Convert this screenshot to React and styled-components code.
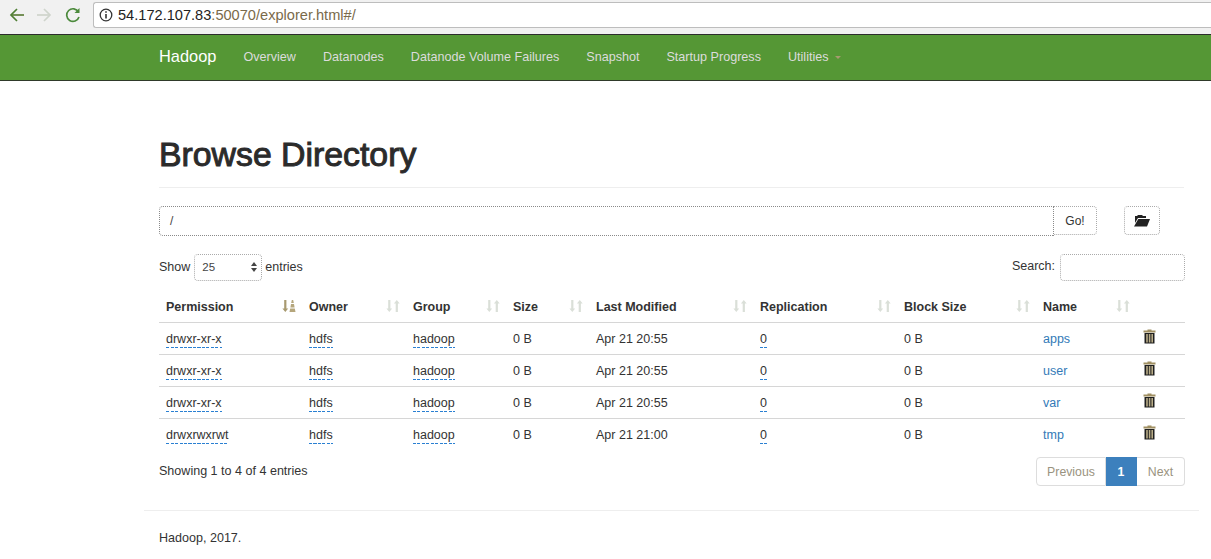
import React from 'react'
import styled, {createGlobalStyle} from 'styled-components'

const GlobalStyle = createGlobalStyle`
	html, body {
		margin: 0;
		padding: 0;
		background: #fff;
	}
	body {
		font-family: 'Liberation Sans', Arial, sans-serif;
		font-size: 13px;
		color: #333;
	}
	* {
		box-sizing: border-box;
	}
`

const ChromeBar = styled.div`
	height: 35px;
	background: #f1f1f1;
	border-bottom: 1px solid #2c2c2c;
	display: flex;
	align-items: flex-start;
	padding: 2px 0 0 8px;
`

const ChromeButton = styled.span`
	width: 18px;
	height: 18px;
	margin-top: 4px;
	margin-right: ${props => props.gap || '11px'};
	display: flex;
`

const AddressBar = styled.div`
	flex: 1;
	height: 26px;
	background: #fff;
	border: 1px solid #bdbdbd;
	border-right: none;
	border-radius: 3px 0 0 3px;
	display: flex;
	align-items: center;
	padding-left: 5px;
	font-size: 14.6px;
	color: #7a6a4a;
`

const Host = styled.span`
	color: #222;
	margin-left: 5px;
`

const Navbar = styled.nav`
	height: 46px;
	background: #559735;
	border-bottom: 1px solid #2f3a2a;
	display: flex;
	align-items: center;
	padding: 0 0 2px 159px;
`

const Brand = styled.span`
	color: #fff;
	font-size: 16.4px;
	margin-right: 27px;
`

const NavItem = styled.span`
	color: #dcdcdc;
	font-size: 12.6px;
	margin-right: 27px;
	display: flex;
	align-items: center;
`

const Caret = styled.i`
	width: 0;
	height: 0;
	margin-left: 6px;
	margin-top: 2px;
	border-top: 3px solid #a89a70;
	border-left: 3px solid transparent;
	border-right: 3px solid transparent;
`

const Container = styled.main`
	width: 1056px;
	margin-left: 144px;
	padding: 0 15px;
`

const PageHeader = styled.div`
	width: 1025px;
	padding-top: 53px;
	height: 107px;
	border-bottom: 1px solid #eee;
`

const Title = styled.h1`
	margin: 0;
	font-size: 33.8px;
	line-height: 40px;
	font-weight: normal;
	-webkit-text-stroke: 1px #2b2b2b;
	color: #2b2b2b;
`

const PathRow = styled.div`
	display: flex;
	margin-top: 18px;
	height: 30px;
`

const PathInput = styled.div`
	width: 895px;
	height: 30px;
	border: 1px dotted #8a8a8a;
	border-radius: 4px 0 0 4px;
	padding: 0 10px;
	font-size: 12px;
	line-height: 28px;
	color: #444;
`

const GoButton = styled.button`
	width: 43px;
	height: 29px;
	border: 1px dotted #aaa;
	border-left: none;
	border-radius: 0 4px 4px 0;
	background: #fff;
	font: 12px 'Liberation Sans', sans-serif;
	color: #333;
	padding: 0;
`

const FolderButton = styled.button`
	width: 36px;
	height: 29px;
	margin-left: 27px;
	border: 1px dotted #aaa;
	border-radius: 4px;
	background: #fff;
	padding: 0;
	display: flex;
	align-items: center;
	justify-content: center;
`

const ControlsRow = styled.div`
	display: flex;
	justify-content: space-between;
	align-items: center;
	margin-top: 18px;
	height: 27px;
	font-size: 12.5px;
`

const LengthLabel = styled.div`
	display: flex;
	align-items: center;
	padding-bottom: 1px;
`

const SelectBox = styled.div`
	width: 68px;
	height: 27px;
	margin: 0 3px 0 4px;
	border: 1px dotted #aaa;
	border-radius: 4px;
	display: flex;
	align-items: center;
	justify-content: space-between;
	padding: 0 3px 0 7px;
	font-size: 11.5px;
	color: #444;
`

const SearchLabel = styled.div`
	display: flex;
	align-items: flex-start;
	height: 27px;
	line-height: 25px;
`

const SearchInput = styled.div`
	width: 125px;
	height: 27px;
	margin-left: 5px;
	border: 1px dotted #aaa;
	border-radius: 4px;
`

const Table = styled.table`
	width: 1026px;
	margin-top: 9px;
	border-collapse: collapse;
	table-layout: fixed;
	font-size: 12.5px;
`

const HeadCell = styled.th`
	height: 32px;
	padding: 3px 7px 0;
	text-align: left;
	font-weight: bold;
	font-size: 12.5px;
	color: #333;
	border-bottom: 1px solid #d6d6d6;
	position: relative;
`

const SortSlot = styled.span`
	position: absolute;
	right: 6px;
	top: 9px;
	display: flex;
`

const Cell = styled.td`
	height: 32px;
	padding: 1px 7px 0;
	border-top: 1px solid #d6d6d6;
	color: #333;
`

const Dashed = styled.span`
	padding-bottom: 2px;
	background: repeating-linear-gradient(to right, #2a80d2 0 3px, transparent 3px 4.5px) left bottom / 100% 1px no-repeat;
`

const NameLink = styled.a`
	color: #337ab7;
`

const TrashSlot = styled.span`
	display: flex;
	margin-top: -4px;
`

const FooterRow = styled.div`
	display: flex;
	justify-content: space-between;
	align-items: flex-start;
	margin-top: 7px;
`

const Info = styled.div`
	font-size: 12.55px;
	padding-top: 7px;
`

const Pagination = styled.div`
	display: flex;
	height: 29px;
	font-size: 12.3px;
`

const PageLink = styled.span`
	display: flex;
	align-items: center;
	justify-content: center;
	width: ${props => props.width};
	color: ${props => props.active ? '#fff' : '#9a9380'};
	font-weight: ${props => props.active ? 'bold' : 'normal'};
	background: ${props => props.active ? '#3c80bd' : '#fff'};
	border: 1px solid ${props => props.active ? '#3c80bd' : '#ddd'};
	border-left-width: ${props => props.first ? '1px' : '0'};
	border-radius: ${props => props.first ? '4px 0 0 4px' : props.last ? '0 4px 4px 0' : '0'};
`

const FooterLine = styled.div`
	width: 1055px;
	margin: 24px 0 0 -15px;
	border-top: 1px solid #eee;
	padding: 20px 15px 0;
	font-size: 12.55px;
	color: #333;
`

const BackIcon = () => (
	<svg width="18" height="18" viewBox="0 0 18 18" fill="none" strokeWidth="1.7">
		<path d="M16 9H3" stroke="#5f7f3c" />
		<path d="M9 3L3 9l6 6" stroke="#4f7f34" />
	</svg>
)

const ForwardIcon = () => (
	<svg width="18" height="18" viewBox="0 0 18 18" fill="none" stroke="#cfd4cc" strokeWidth="1.7">
		<path d="M2 9h13" />
		<path d="M9 3l6 6-6 6" />
	</svg>
)

const ReloadIcon = () => (
	<svg width="18" height="18" viewBox="0 0 18 18" fill="none">
		<path d="M14.5 6A6.3 6.3 0 1 0 15 11" stroke="#4c8a3c" strokeWidth="1.7" />
		<path d="M15.5 2v5h-5z" fill="#4c8a3c" />
	</svg>
)

const InfoIcon = () => (
	<svg width="14" height="14" viewBox="0 0 14 14" fill="none">
		<circle cx="7" cy="7" r="5.8" stroke="#333" strokeWidth="1.3" />
		<path d="M6.2 3.3h1.6v1.5H6.2zM6.2 6h1.6v4.6H6.2z" fill="#333" />
	</svg>
)

const SortIcon = ({active}) => (
	<svg width="14" height="14" viewBox="0 0 14 14">
		<path d="M2.2 1h2.2v8.5h1.8L3.3 13 .4 9.5h1.8z" fill={active ? '#a89a70' : '#dadfd8'} />
		{active
			? <path d="M9.8 1h1.4l.6 3H9.2zM9 5h3l.6 3.4H8.4zM8.2 9.4h4.6l.7 3.6H7.5z" fill="#b5a67c" />
			: <path d="M9.7 13h2.2V4.5h1.8L10.8 1 7.9 4.5h1.8z" fill="#dadfd8" />}
	</svg>
)

const SelectArrows = () => (
	<svg width="8" height="12" viewBox="0 0 8 12" fill="#444">
		<path d="M4 1l3 4H1zM4 11L1 7h6z" />
	</svg>
)

const FolderIcon = () => (
	<svg width="16" height="14" viewBox="0 0 16 14" fill="#222">
		<path d="M1 3V2h2l1-1h4l1 1h3v2H4L1 9z" />
		<path d="M4.3 5H16l-3 7.5H0z" />
	</svg>
)

const TrashIcon = () => (
	<svg width="13" height="15" viewBox="0 0 13 15">
		<path d="M4.5 1.5V.5h4v1H12.5v2H.5v-2z" fill="#a08f62" />
		<path d="M1.5 4h10v10.5h-10z" fill="#1f1f1f" />
		<path d="M3.2 5h1.6v8.5H3.2zM5.8 5h1.6v8.5H5.8zM8.4 5H10v8.5H8.4z" fill="#b9ad88" />
	</svg>
)

const columns = [
	{label: 'Permission', width: 143, active: true},
	{label: 'Owner', width: 104},
	{label: 'Group', width: 100},
	{label: 'Size', width: 83},
	{label: 'Last Modified', width: 164},
	{label: 'Replication', width: 144},
	{label: 'Block Size', width: 139},
	{label: 'Name', width: 100},
]

const rows = [
	{perm: 'drwxr-xr-x', date: 'Apr 21 20:55', name: 'apps'},
	{perm: 'drwxr-xr-x', date: 'Apr 21 20:55', name: 'user'},
	{perm: 'drwxr-xr-x', date: 'Apr 21 20:55', name: 'var'},
	{perm: 'drwxrwxrwt', date: 'Apr 21 21:00', name: 'tmp'},
]

const App = () => {
	return (
		<>
			<GlobalStyle />
			<ChromeBar>
				<ChromeButton gap="9px"><BackIcon /></ChromeButton>
				<ChromeButton gap="11px"><ForwardIcon /></ChromeButton>
				<ChromeButton gap="11px"><ReloadIcon /></ChromeButton>
				<AddressBar>
					<InfoIcon />
					<Host>54.172.107.83</Host>:50070/explorer.html#/
				</AddressBar>
			</ChromeBar>
			<Navbar>
				<Brand>Hadoop</Brand>
				<NavItem>Overview</NavItem>
				<NavItem>Datanodes</NavItem>
				<NavItem>Datanode Volume Failures</NavItem>
				<NavItem>Snapshot</NavItem>
				<NavItem>Startup Progress</NavItem>
				<NavItem>Utilities<Caret /></NavItem>
			</Navbar>
			<Container>
				<PageHeader>
					<Title>Browse Directory</Title>
				</PageHeader>
				<PathRow>
					<PathInput>/</PathInput>
					<GoButton>Go!</GoButton>
					<FolderButton><FolderIcon /></FolderButton>
				</PathRow>
				<ControlsRow>
					<LengthLabel>
						Show
						<SelectBox>25<SelectArrows /></SelectBox>
						entries
					</LengthLabel>
					<SearchLabel>
						Search:
						<SearchInput />
					</SearchLabel>
				</ControlsRow>
				<Table>
					<colgroup>
						{columns.map(c => <col key={c.label} style={{width: c.width}} />)}
						<col />
					</colgroup>
					<thead>
						<tr>
							{columns.map(c => (
								<HeadCell key={c.label}>
									{c.label}
									<SortSlot><SortIcon active={c.active} /></SortSlot>
								</HeadCell>
							))}
							<HeadCell />
						</tr>
					</thead>
					<tbody>
						{rows.map(r => (
							<tr key={r.name}>
								<Cell><Dashed>{r.perm}</Dashed></Cell>
								<Cell><Dashed>hdfs</Dashed></Cell>
								<Cell><Dashed>hadoop</Dashed></Cell>
								<Cell>0 B</Cell>
								<Cell>{r.date}</Cell>
								<Cell><Dashed>0</Dashed></Cell>
								<Cell>0 B</Cell>
								<Cell><NameLink>{r.name}</NameLink></Cell>
								<Cell><TrashSlot><TrashIcon /></TrashSlot></Cell>
							</tr>
						))}
					</tbody>
				</Table>
				<FooterRow>
					<Info>Showing 1 to 4 of 4 entries</Info>
					<Pagination>
						<PageLink first width="70px">Previous</PageLink>
						<PageLink active width="31px">1</PageLink>
						<PageLink last width="48px">Next</PageLink>
					</Pagination>
				</FooterRow>
				<FooterLine>Hadoop, 2017.</FooterLine>
			</Container>
		</>
	)
}

export default App
